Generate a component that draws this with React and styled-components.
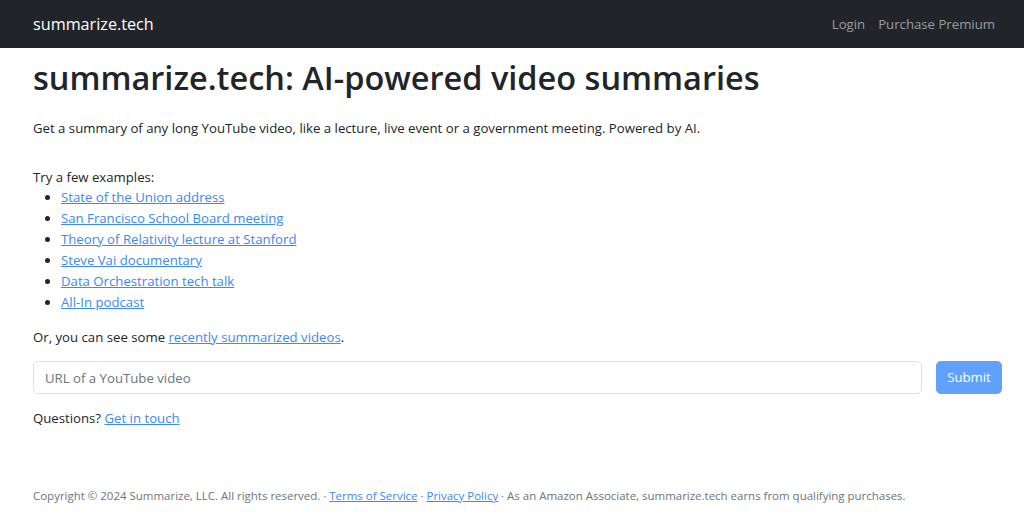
import React from "react";
import styled, { createGlobalStyle } from "styled-components";

const Global = createGlobalStyle`
  html, body { margin: 0; padding: 0; background: #fff; }
  body {
    font-family: "Open Sans", "Noto Sans", sans-serif;
    font-size: 13.2px;
    line-height: 21px;
    color: #212529;
  }
  * { box-sizing: border-box; }
`;

const Navbar = styled.nav`
  height: 48px;
  background: #212529;
  display: flex;
  align-items: center;
  justify-content: space-between;
  padding: 0 29px 0 33px;
`;

const Brand = styled.a`
  color: #fff;
  font-size: 16.2px;
  text-decoration: none;
`;

const NavLinks = styled.div`
  display: flex;
  gap: 13px;
`;

const NavLink = styled.a`
  color: rgba(255, 255, 255, 0.55);
  font-size: 13.2px;
  text-decoration: none;
`;

const Main = styled.main`
  padding: 0 22px 0 33px;
`;

const Title = styled.h1`
  margin: 10px 0 0;
  font-size: 32.5px;
  font-weight: 600;
  line-height: 40px;
`;

const Para = styled.p`
  margin: ${(p) => p.$mt ?? 0}px 0 0;
`;

const List = styled.ul`
  margin: -1px 0 0;
  padding-left: 28px;
`;

const Link = styled.a`
  color: #3a88fd;
  text-decoration: underline;
`;

const Form = styled.form`
  display: flex;
  gap: 14px;
  margin-top: 13px;
`;

const Input = styled.input`
  flex: 1;
  height: 33px;
  border: 1px solid #dee2e6;
  border-radius: 5px;
  padding: 0 11px;
  font: inherit;
  color: #212529;
  &::placeholder { color: #6c757d; }
`;

const Button = styled.button`
  height: 33px;
  width: 66px;
  padding: 0;
  border: none;
  border-radius: 5px;
  background: #61a1fe;
  color: #fff;
  font: inherit;
`;

const Footer = styled.footer`
  margin-top: 58px;
  font-size: 11.48px;
  line-height: 17px;
  color: #6c757d;
`;

const FootLink = styled.a`
  color: #3a88fd;
  text-decoration: underline;
`;

const examples = [
  "State of the Union address",
  "San Francisco School Board meeting",
  "Theory of Relativity lecture at Stanford",
  "Steve Vai documentary",
  "Data Orchestration tech talk",
  "All-In podcast",
];

export default function App() {
  return (
    <>
      <Global />
      <Navbar>
        <Brand href="#">summarize.tech</Brand>
        <NavLinks>
          <NavLink href="#">Login</NavLink>
          <NavLink href="#">Purchase Premium</NavLink>
        </NavLinks>
      </Navbar>
      <Main>
        <Title>summarize.tech: AI-powered video summaries</Title>
        <Para $mt={20}>
          Get a summary of any long YouTube video, like a lecture, live event or a
          government meeting. Powered by AI.
        </Para>
        <Para $mt={28}>Try a few examples:</Para>
        <List>
          {examples.map((e) => (
            <li key={e}>
              <Link href="#">{e}</Link>
            </li>
          ))}
        </List>
        <Para $mt={14}>
          Or, you can see some <Link href="#">recently summarized videos</Link>.
        </Para>
        <Form onSubmit={(e) => e.preventDefault()}>
          <Input placeholder="URL of a YouTube video" />
          <Button type="submit">Submit</Button>
        </Form>
        <Para $mt={14}>
          Questions? <Link href="#">Get in touch</Link>
        </Para>
        <Footer>
          Copyright © 2024 Summarize, LLC. All rights reserved. ·{" "}
          <FootLink href="#">Terms of Service</FootLink> ·{" "}
          <FootLink href="#">Privacy Policy</FootLink> · As an Amazon Associate,
          summarize.tech earns from qualifying purchases.
        </Footer>
      </Main>
    </>
  );
}
